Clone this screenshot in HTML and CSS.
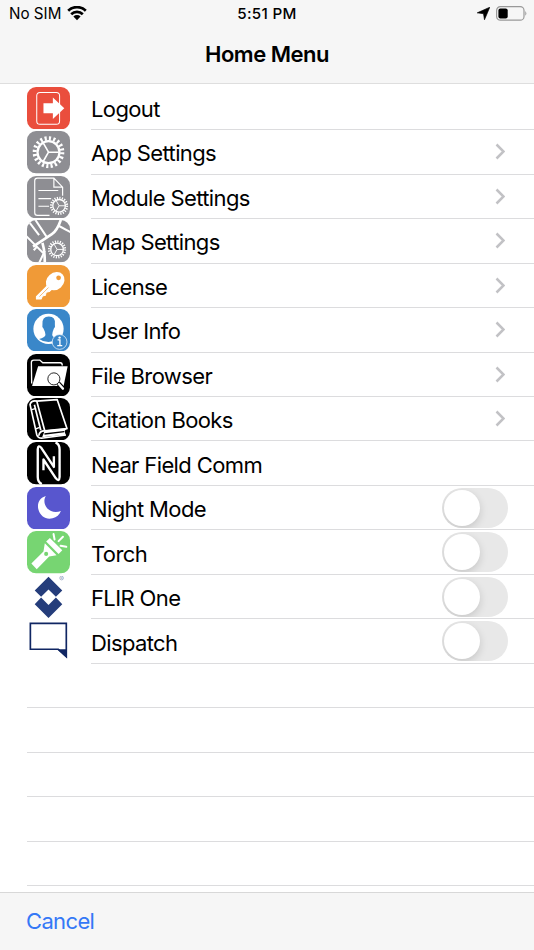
FILE: index.html
```html
<!DOCTYPE html>
<html lang="en">
<head>
  <meta charset="UTF-8">
  <meta name="viewport" content="width=device-width, initial-scale=1">
  <title>Home Menu</title>
  <link rel="stylesheet" href="styles.css">
</head>
<body>
  <svg class="defs" width="0" height="0">
    <symbol id="gear" viewBox="0 0 100 100">
      <g fill="none" stroke="#fff">
        <circle cx="50" cy="50" r="43" stroke-width="13" stroke-dasharray="6.6 6.91"/>
        <circle cx="50" cy="50" r="34" stroke-width="7"/>
        <path d="M50 50H82M50 50L34 22M50 50L34 78" stroke-width="5"/>
      </g>
    </symbol>
    <symbol id="chevron" viewBox="0 0 10 17">
      <path d="M1.5 1.5L8.5 8.5L1.5 15.5" fill="none" stroke="#c2c2c5" stroke-width="2.5"/>
    </symbol>
  </svg>

  <header>
    <div class="status">
      <div class="carrier">
        <span>No SIM</span>
        <svg width="20" height="15" viewBox="0 0 20 15">
          <path d="M1.2 4.7A12.6 12.6 0 0 1 18.8 4.7M4.2 8.2A8.3 8.3 0 0 1 15.8 8.2" fill="none" stroke="#000" stroke-width="2.7"/>
          <path d="M6.4 10.6A5.1 5.1 0 0 1 13.6 10.6L10 14.2Z"/>
        </svg>
      </div>
      <div class="time">5:51 PM</div>
      <div class="power">
        <svg width="13" height="13" viewBox="0 0 12 12"><path d="M11.8.2L6.9 11.8L6 6.2L.2 5.4Z" stroke="#000" stroke-width=".6" stroke-linejoin="round"/></svg>
        <svg width="31" height="15" viewBox="0 0 31 15">
          <rect x=".6" y=".6" width="27.4" height="13.6" rx="3.8" fill="none" stroke="#999" stroke-width="1.2"/>
          <rect x="2.4" y="2.4" width="9.3" height="10" rx="2"/>
          <path d="M29.3 5Q31.4 7.4 29.3 9.8Z" fill="#999"/>
        </svg>
      </div>
    </div>
    <h1>Home Menu</h1>
  </header>

  <main>
    <div class="row">
      <svg class="icon" viewBox="0 0 128 126">
        <rect width="128" height="126" rx="27" fill="#ea4e3d"/>
        <rect x="29" y="16" width="68" height="95" rx="10" fill="none" stroke="#fff" stroke-width="3"/>
        <path d="M49 48H77V31L111 63L77 95V78H49Z" fill="#fff"/>
      </svg>
      <div class="cell"><span>Logout</span></div>
    </div>
    <div class="row">
      <svg class="icon" viewBox="0 0 128 126">
        <rect width="128" height="126" rx="27" fill="#8e8e93"/>
        <use href="#gear" x="16" y="15" width="96" height="96"/>
      </svg>
      <div class="cell"><span>App Settings</span><svg class="chevron"><use href="#chevron"/></svg></div>
    </div>
    <div class="row">
      <svg class="icon" viewBox="0 0 128 126">
        <rect width="128" height="126" rx="27" fill="#8e8e93"/>
        <path d="M67 117H31Q23 117 23 109V14Q23 6 31 6H80L106 33V59M80 6V33H106M34 43H93M34 67H72M34 90H66" fill="none" stroke="#fff" stroke-width="3.5"/>
        <circle cx="95" cy="88" r="29" fill="#8e8e93"/>
        <use href="#gear" x="68" y="61" width="55" height="55"/>
      </svg>
      <div class="cell"><span>Module Settings</span><svg class="chevron"><use href="#chevron"/></svg></div>
    </div>
    <div class="row">
      <svg class="icon" viewBox="0 0 128 126">
        <clipPath id="tile"><rect width="128" height="126" rx="27"/></clipPath>
        <g clip-path="url(#tile)">
          <rect width="128" height="126" fill="#8e8e93"/>
          <g fill="none" stroke="#fff">
            <path d="M102 -4Q90 32 74 42L18 79M46 68Q53 90 53 130" stroke-width="8"/>
            <path d="M24 -2L59 51M-3 47L53 103M30 79L20 90M53 92L35 130M94 17L130 36M7 7L36 45" stroke-width="6"/>
          </g>
          <circle cx="89" cy="87" r="29" fill="#8e8e93"/>
          <use href="#gear" x="62" y="60" width="55" height="55"/>
        </g>
      </svg>
      <div class="cell"><span>Map Settings</span><svg class="chevron"><use href="#chevron"/></svg></div>
    </div>
    <div class="row">
      <svg class="icon" viewBox="0 0 128 126">
        <rect width="128" height="126" rx="27" fill="#f09a37"/>
        <path d="M60 62L28 94L28 101H42L46 92L55 90L57 81L66 79L76 70Z" fill="#fff" stroke="#fff" stroke-width="3" stroke-linejoin="round"/>
        <ellipse cx="84" cy="48" rx="30" ry="25" transform="rotate(-42 84 48)" fill="#fff"/>
        <circle cx="94" cy="38" r="7" fill="#f09a37"/>
        <path d="M37 94L64 67" stroke="#f09a37" stroke-width="2"/>
      </svg>
      <div class="cell"><span>License</span><svg class="chevron"><use href="#chevron"/></svg></div>
    </div>
    <div class="row">
      <svg class="icon" viewBox="0 0 128 126">
        <rect width="128" height="126" rx="27" fill="#3a87c9"/>
        <circle cx="64" cy="59" r="45" fill="#fff"/>
        <path d="M55 77Q54 67 49 58Q44 54 46 45Q44 23 65 22Q86 23 83 45Q85 54 80 58Q76 67 75 77Q77 84 92 89Q80 98 64 98Q48 98 36 89Q53 84 55 77Z" fill="#3a87c9"/>
        <circle cx="97" cy="98" r="22" fill="#3a87c9" stroke="#fff" stroke-width="2"/>
        <path d="M91 92H98V108M90 109H105" fill="none" stroke="#fff" stroke-width="4"/>
        <circle cx="97" cy="85" r="3.5" fill="#fff"/>
      </svg>
      <div class="cell"><span>User Info</span><svg class="chevron"><use href="#chevron"/></svg></div>
    </div>
    <div class="row">
      <svg class="icon" viewBox="0 0 128 126">
        <rect width="128" height="126" rx="27"/>
        <path d="M14 88L13 25Q13 18 20 18H38L47 26H99Q105 26 105 34" fill="none" stroke="#fff" stroke-width="4"/>
        <path d="M33 36H121L109 95H15Z" fill="#fff"/>
        <path d="M93 87L109 104" stroke="#000" stroke-width="13"/>
        <path d="M92 86L107 103" stroke="#fff" stroke-width="7" stroke-linecap="round"/>
        <circle cx="80" cy="74" r="18" fill="#fff" stroke="#000" stroke-width="2.5"/>
      </svg>
      <div class="cell"><span>File Browser</span><svg class="chevron"><use href="#chevron"/></svg></div>
    </div>
    <div class="row">
      <svg class="icon" viewBox="0 0 128 126">
        <rect width="128" height="126" rx="27"/>
        <path d="M53 96L119 90L112 98L115 109L45 117Z" fill="#fff"/>
        <g fill="none" stroke="#fff" stroke-width="5" stroke-linejoin="round">
          <path d="M29 9L90 5L119 91L53 98Z"/>
          <path d="M29 9Q13 6 9 19L29 109Q33 121 48 119L116 110M53 98Q38 97 35 112M22 20L41 96"/>
          <path d="M12 35L27 31M26 92L38 87" stroke-width="4"/>
        </g>
        <path d="M52 107L111 100" stroke="#000" stroke-width="4"/>
      </svg>
      <div class="cell"><span>Citation Books</span><svg class="chevron"><use href="#chevron"/></svg></div>
    </div>
    <div class="row">
      <svg class="icon" viewBox="0 0 128 126">
        <rect width="128" height="126" rx="27"/>
        <g fill="none" stroke="#fff" stroke-width="7" stroke-linejoin="round">
          <path d="M44 125Q32 119 32 104V22Q33 6 43 18L80 74V42"/>
          <path d="M85 1Q97 7 97 22V104Q96 120 86 108L49 52V84"/>
        </g>
      </svg>
      <div class="cell"><span>Near Field Comm</span></div>
    </div>
    <div class="row">
      <svg class="icon" viewBox="0 0 128 126">
        <rect width="128" height="126" rx="27" fill="#5856ce"/>
        <path d="M56 27C38 32 29 49 34 67C39 87 57 98 76 93C88 90 97 82 101 71C86 77 70 74 60 63C51 53 49 38 56 27Z" fill="#fff"/>
      </svg>
      <div class="cell"><span>Night Mode</span><span class="switch"></span></div>
    </div>
    <div class="row">
      <svg class="icon" viewBox="0 0 128 126">
        <rect width="128" height="126" rx="27" fill="#77d572"/>
        <g fill="#fff">
          <path d="M13 97L49 61L53 36L88 72L66 76L29 114Z"/>
          <path d="M57 31L68 21L105 57L94 68Z"/>
        </g>
        <circle cx="57" cy="68" r="6" fill="#77d572"/>
        <path d="M82 25L79 9M94 30L107 17M100 44L117 47" stroke="#fff" stroke-width="6" stroke-linecap="round"/>
      </svg>
      <div class="cell"><span>Torch</span><span class="switch"></span></div>
    </div>
    <div class="row">
      <svg class="icon" viewBox="0 0 128 126">
        <path d="M64 2L105 43L86 62L64 40L42 62L23 43ZM42 64L64 86L86 64L105 84L64 125L23 84Z" fill="#253d7b"/>
        <circle cx="103" cy="6" r="5.5" fill="none" stroke="#6a7ba6" stroke-width="1.5"/>
        <text class="mark" x="103" y="9" text-anchor="middle">R</text>
      </svg>
      <div class="cell"><span>FLIR One</span><span class="switch"></span></div>
    </div>
    <div class="row">
      <svg class="icon" viewBox="0 0 128 126">
        <path d="M10 10H117V109L93 87H10Z" fill="#fff" stroke="#102663" stroke-width="5"/>
        <path d="M90 87H119V114Z" fill="#102663"/>
      </svg>
      <div class="cell"><span>Dispatch</span><span class="switch"></span></div>
    </div>
    <div class="row empty"></div>
    <div class="row empty"></div>
    <div class="row empty"></div>
    <div class="row empty"></div>
    <div class="row empty"></div>
  </main>

  <footer>
    <a class="cancel">Cancel</a>
  </footer>
</body>
</html>
```
FILE: styles.css
```css
* {
  box-sizing: border-box;
}
body {
  margin: 0;
  height: 950px;
  display: flex;
  flex-direction: column;
  overflow: hidden;
  background: #fff;
  color: #000;
  font-family: Inter, "Liberation Sans", sans-serif;
}
.defs {
  position: absolute;
}
header {
  flex: none;
  height: 84px;
  background: #f6f6f6;
  border-bottom: 1px solid #dedede;
}
.status {
  display: grid;
  grid-template-columns: 1fr auto 1fr;
  align-items: center;
  height: 27px;
  padding: 0 7px 0 9px;
  font-size: 15.2px;
}
.carrier, .power {
  display: flex;
  align-items: center;
  gap: 6px;
}
.power {
  justify-content: flex-end;
}
.time {
  font-weight: 500;
  padding-right: 2px;
  letter-spacing: 0.3px;
}
h1 {
  margin: 14px 0 0;
  font-size: 22px;
  line-height: 27px;
  font-weight: 600;
  letter-spacing: -0.5px;
  text-align: center;
}
main {
  flex: 1;
  min-height: 0;
  padding-top: 1.7px;
  overflow: hidden;
}
.row {
  display: flex;
  align-items: center;
  height: 44.47px;
  padding-left: 27px;
}
.icon {
  flex: none;
  width: 43px;
  height: 42.4px;
  margin-right: 21px;
}
.cell {
  flex: 1;
  align-self: stretch;
  display: flex;
  align-items: center;
  justify-content: space-between;
  padding-right: 26px;
  border-bottom: 1px solid #dcdcde;
  font-size: 22px;
  letter-spacing: -0.62px;
}
.cell span:first-child {
  padding-top: 3px;
}
.chevron {
  width: 10px;
  height: 17px;
  margin-right: 3px;
}
.switch {
  width: 66px;
  height: 40px;
  padding: 2px;
  border-radius: 20px;
  background: #e8e8e8;
  overflow: hidden;
}
.switch::before {
  content: "";
  display: block;
  width: 36px;
  height: 36px;
  border-radius: 50%;
  background: #fff;
  box-shadow: 0 3px 8px rgba(0, 0, 0, 0.15);
}
.empty::before {
  content: "";
  flex: 1;
  align-self: stretch;
  border-bottom: 1px solid #dcdcde;
}
.mark {
  font-size: 8px;
  fill: #6a7ba6;
}
footer {
  flex: none;
  height: 58px;
  padding: 14px 26px;
  background: #f6f6f6;
  border-top: 1px solid #d8d8d8;
}
.cancel {
  color: #3478f6;
  font-size: 22px;
  line-height: 28px;
  letter-spacing: -0.65px;
}
```
